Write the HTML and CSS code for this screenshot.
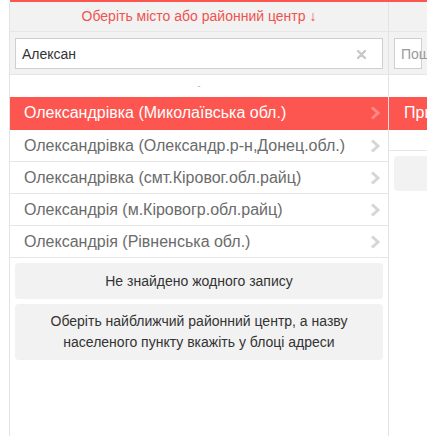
FILE: index.html
```html
<!DOCTYPE html>
<html>
<head>
<meta charset="utf-8">
<link rel="stylesheet" href="styles.css">
</head>
<body>
<div class="topbar"></div>
<div class="page">
  <div class="col col-left">
    <div class="head">Оберіть місто або районний центр ↓</div>
    <div class="search">
      <div class="input">
        <span class="val">Алексан</span>
        <svg class="clear" width="9" height="9" viewBox="0 0 9 9"><path d="M1 1L8 8M8 1L1 8" stroke="#c8c8c8" stroke-width="2.4" stroke-linecap="round"/></svg>
      </div>
    </div>
    <div class="loader">-</div>
    <ul class="list">
      <li class="item active"><span>Олександрівка (Миколаївська обл.)</span><svg class="chev" width="10" height="14" viewBox="0 0 10 14"><path d="M2 1.5L8 7L2 12.5" fill="none" stroke="currentColor" stroke-width="3"/></svg></li>
      <li class="item"><span>Олександрівка (Олександр.р-н,Донец.обл.)</span><svg class="chev" width="10" height="14" viewBox="0 0 10 14"><path d="M2 1.5L8 7L2 12.5" fill="none" stroke="currentColor" stroke-width="3"/></svg></li>
      <li class="item"><span>Олександрівка (смт.Кіровог.обл.райц)</span><svg class="chev" width="10" height="14" viewBox="0 0 10 14"><path d="M2 1.5L8 7L2 12.5" fill="none" stroke="currentColor" stroke-width="3"/></svg></li>
      <li class="item"><span>Олександрія (м.Кіровогр.обл.райц)</span><svg class="chev" width="10" height="14" viewBox="0 0 10 14"><path d="M2 1.5L8 7L2 12.5" fill="none" stroke="currentColor" stroke-width="3"/></svg></li>
      <li class="item"><span>Олександрія (Рівненська обл.)</span><svg class="chev" width="10" height="14" viewBox="0 0 10 14"><path d="M2 1.5L8 7L2 12.5" fill="none" stroke="currentColor" stroke-width="3"/></svg></li>
    </ul>
    <div class="note">Не знайдено жодного запису</div>
    <div class="note note-2">Оберіть найближчий районний центр, а назву<br>населеного пункту вкажіть у блоці адреси</div>
  </div>
  <div class="col col-right">
    <div class="head"></div>
    <div class="search">
      <div class="input"><span class="ph">Пошук</span></div>
    </div>
    <div class="loader"></div>
    <div class="item active"><span>Приватний сектор</span></div>
    <div class="blank"></div>
    <div class="rbox"></div>
  </div>
</div>
</body>
</html>
```

FILE: styles.css
```css
* { box-sizing: border-box; }
html, body { margin: 0; padding: 0; background: #fff; }
body {
  font-family: "Liberation Sans", Arial, sans-serif;
  width: 427px;
  height: 436px;
  overflow: hidden;
}
.topbar { height: 2px; background: #fd5650; margin-left: 10px; }
.page {
  display: flex;
  margin-left: 9px;
  height: 434px;
}
.col { display: flex; flex-direction: column; }
.col-left {
  width: 380px;
  flex: none;
  border-left: 1px solid #e3e3e3;
  border-right: 1px solid #e3e3e3;
}
.col-right { flex: 1; overflow: hidden; min-width: 0; }
.head {
  height: 30px;
  background: #f2f2f2;
  border-bottom: 1px solid #e6e6e6;
  color: #f0524f;
  font-size: 14px;
  text-align: center;
  line-height: 29px;
}
.search {
  background: #f2f2f2;
  padding: 6px 5px 5px 5px;
  height: 43px;
  border-bottom: 1px solid #e6e6e6;
}
.input {
  height: 31px;
  background: #fff;
  border: 1px solid #cfcfcf;
  display: flex;
  align-items: center;
  justify-content: space-between;
  padding: 0 16px 0 6px;
  font-size: 14px;
  color: #333;
}
.input .ph { color: #999; white-space: nowrap; }
.clear { flex: none; margin-top: 1px; }
.loader {
  height: 22px;
  text-align: center;
  color: #bbb;
  font-size: 10px;
  line-height: 22px;
}
.list { list-style: none; margin: 0; padding: 0; }
.item {
  height: 32px;
  display: flex;
  align-items: center;
  justify-content: space-between;
  padding: 0 8px 0 14px;
  border-bottom: 1px solid #e6e6e6;
  font-size: 16px;
  color: #6b6b6b;
  white-space: nowrap;
}
.item.active {
  background: #fd5650;
  color: #fff;
  border-bottom-color: #fd5650;
  height: 33px;
}
.chev { color: #d6d6d6; flex: none; }
.item.active .chev { color: rgba(255,255,255,0.3); }
.col-right .item { padding-left: 14px; border-left: 1px solid #fd5650; }
.blank { height: 21px; border-bottom: 1px solid #e6e6e6; }
.rbox {
  margin: 5px 0 0 5px;
  height: 35px;
  background: #f2f2f2;
  border-radius: 4px 0 0 4px;
}
.note {
  margin: 5px 5px 0 5px;
  background: #f2f2f2;
  border-radius: 4px;
  font-size: 14px;
  color: #333;
  text-align: center;
  padding: 8px 10px;
  line-height: 20px;
}
.note-2 { padding: 7px 10px; line-height: 21px; }
```
